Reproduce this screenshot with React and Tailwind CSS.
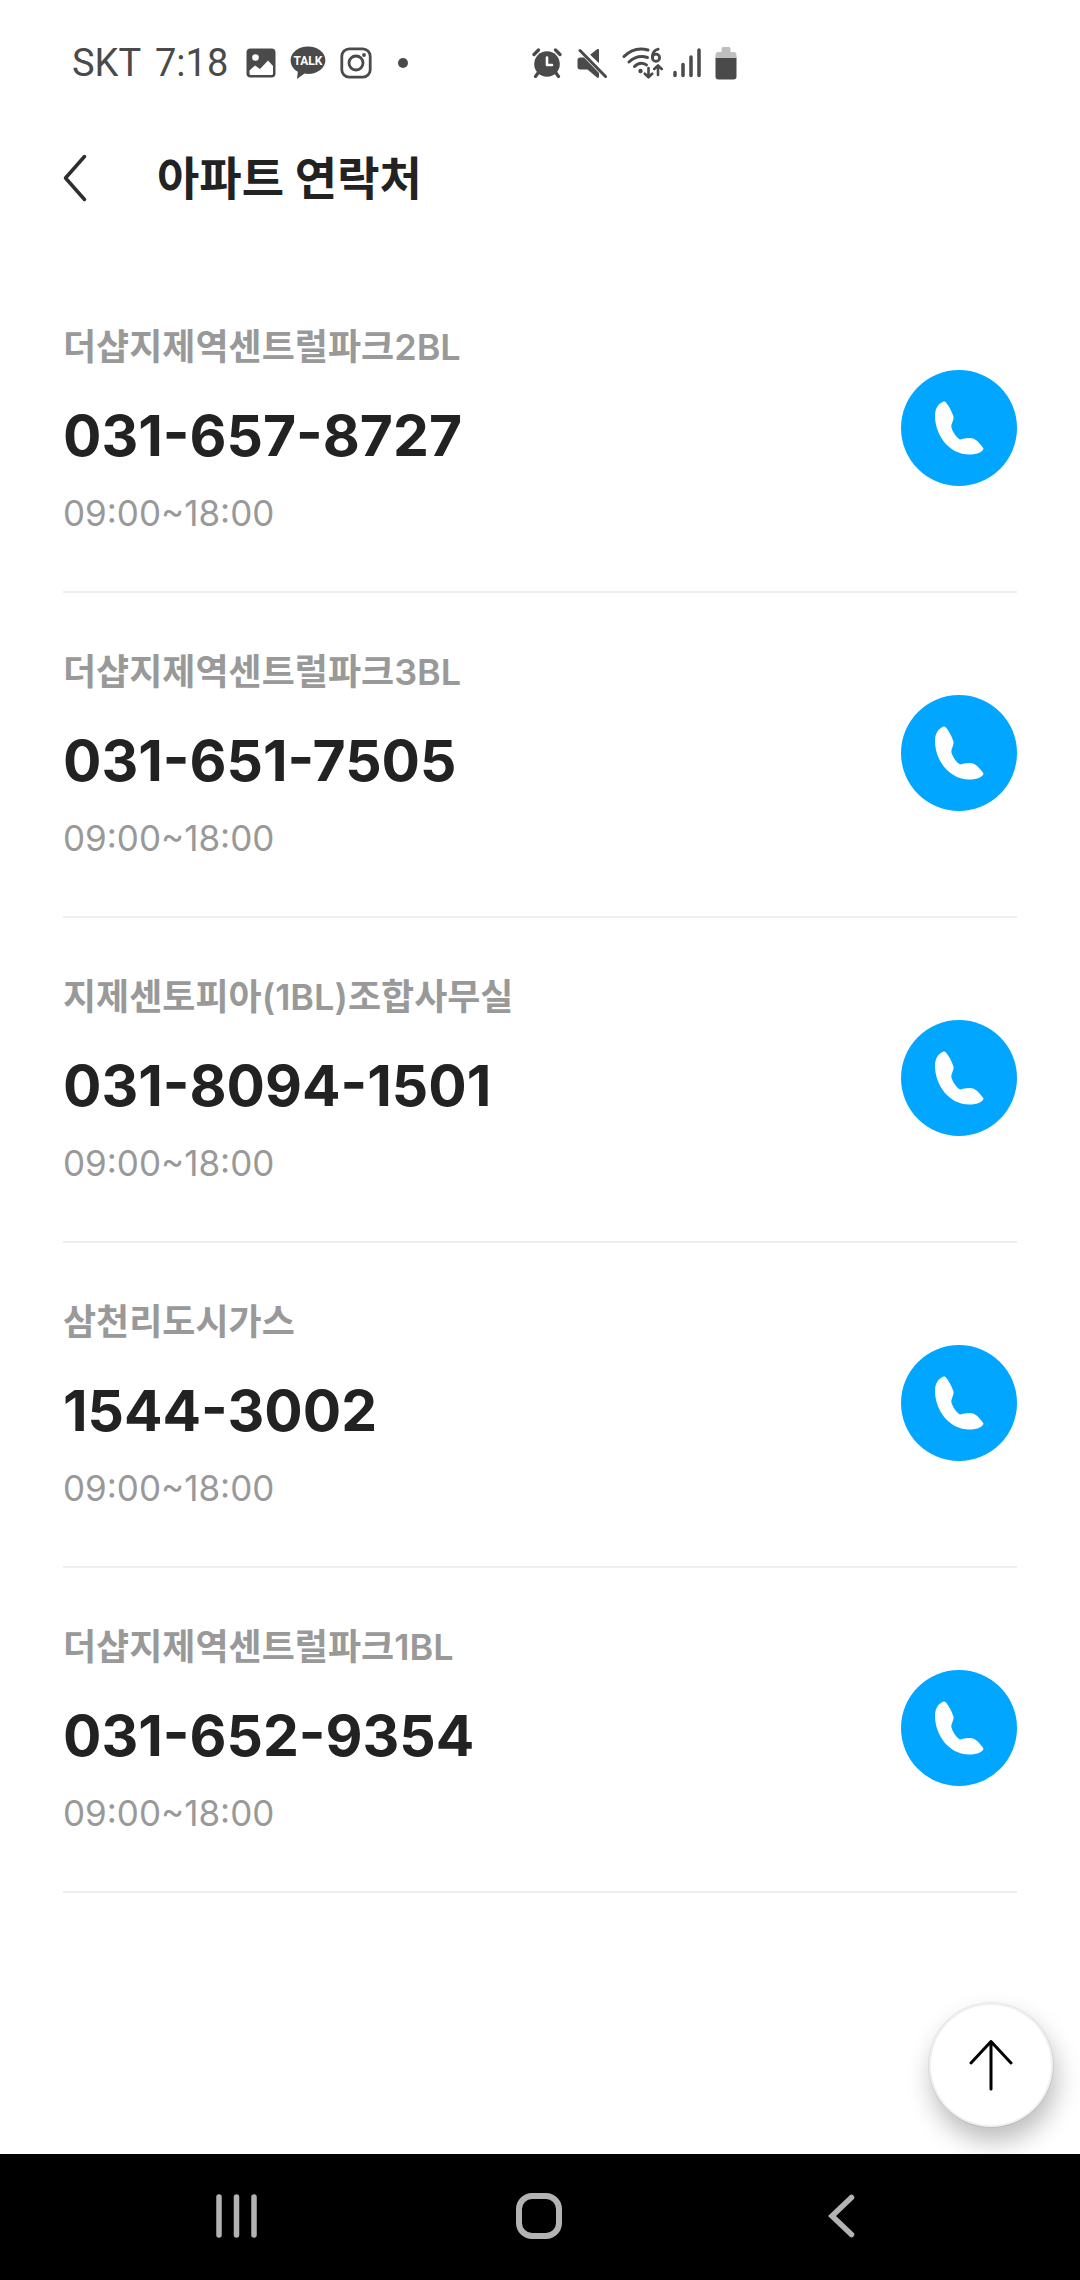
const contacts = [
  { name: '더샵지제역센트럴파크2BL', phone: '031-657-8727', hours: '09:00~18:00' },
  { name: '더샵지제역센트럴파크3BL', phone: '031-651-7505', hours: '09:00~18:00' },
  { name: '지제센토피아(1BL)조합사무실', phone: '031-8094-1501', hours: '09:00~18:00' },
  { name: '삼천리도시가스', phone: '1544-3002', hours: '09:00~18:00' },
  { name: '더샵지제역센트럴파크1BL', phone: '031-652-9354', hours: '09:00~18:00' },
];

function PictureIcon() {
  return (
    <svg width="30" height="30" viewBox="0 0 30 30" aria-hidden="true">
      <rect x="0.5" y="0.5" width="29" height="29" rx="4" fill="#4a4a4a" />
      <circle cx="9.500" cy="9.500" r="3.300" fill="#fff" />
      <path d="M3.500 22.500 9 17.500l5 3.500 8-8.500 5 5.500v7.500a1.500 1.500 0 0 1-1.500 1.500H5a1.500 1.500 0 0 1-1.500-1.500z" fill="#fff" />
    </svg>
  );
}

function TalkIcon() {
  return (
    <svg width="36" height="34" viewBox="0 0 36 34" aria-hidden="true">
      <path d="M18 .5C8.400.5.600 6.600.600 14.200c0 4.900 2.800 9.100 7.200 11.500L7 33l7.500-5.400c1.100.2 2.300.3 3.500.3 9.600 0 17.400-6.100 17.400-13.700S27.600.5 18 .5z" fill="#4a4a4a" />
      <text x="18" y="19" textAnchor="middle" fontFamily="Roboto, sans-serif" fontWeight="700" fontSize="12" fill="#fff">TALK</text>
    </svg>
  );
}

function CameraIcon() {
  return (
    <svg width="32" height="32" viewBox="0 0 32 32" fill="none" stroke="#4a4a4a" aria-hidden="true">
      <rect x="1.800" y="1.800" width="28.400" height="28.400" rx="7.500" strokeWidth="2.800" />
      <circle cx="16" cy="16" r="7" strokeWidth="2.800" />
      <circle cx="24" cy="8" r="1.900" fill="#4a4a4a" stroke="none" />
    </svg>
  );
}

function AlarmIcon() {
  return (
    <svg width="30" height="30" viewBox="0 0 30 30" fill="none" stroke="#4a4a4a" strokeLinecap="round" aria-hidden="true">
      <circle cx="15" cy="16" r="12.800" fill="#4a4a4a" stroke="none" />
      <path d="M2 6.500 6.500 2M28 6.500 23.500 2" strokeWidth="3.200" />
      <path d="m6 25-2.500 3.500M24 25l2.500 3.500" strokeWidth="3.200" />
      <path d="M15 9.500V17h5" stroke="#fff" strokeWidth="2.600" strokeLinejoin="round" />
    </svg>
  );
}

function MuteIcon() {
  return (
    <svg width="31" height="31" viewBox="-1 0 31 31" aria-hidden="true">
      <path d="M12.800 7 20 1.200c.9-.7 2-.2 2 .9v13.100z" fill="#4a4a4a" />
      <path d="M3 9.500h4L22 25v3.500c0 1.100-1.100 1.600-2 .9L10.500 21.500H3c-1.400 0-2.500-1.100-2.500-2.500v-7c0-1.400 1.100-2.500 2.500-2.500z" fill="#4a4a4a" />
      <path d="M5 0 31 26" stroke="#fff" strokeWidth="2" />
      <path d="M3 2.500 28.500 28.500" stroke="#4a4a4a" strokeWidth="3" strokeLinecap="round" />
    </svg>
  );
}

function WifiIcon() {
  return (
    <svg width="42" height="32" viewBox="-1 0 42 32" fill="none" stroke="#4a4a4a" strokeLinecap="round" aria-hidden="true">
      <path d="M2 9.500C8.500 3 17 .5 26 3" strokeWidth="3" />
      <path d="M7 15c5.500-5 12-6.500 18.500-4.500" strokeWidth="3" />
      <path d="M12.500 19.500c3.500-3.500 8-4 12-1.500" strokeWidth="3" />
      <circle cx="18.500" cy="24" r="2.200" fill="#4a4a4a" stroke="none" />
      <circle cx="34" cy="10.800" r="3.600" strokeWidth="2.800" />
      <path d="M30.400 10.500c0-4.500 2-7.500 5.800-8.300" strokeWidth="2.800" />
      <path d="M26.500 21v9M22.800 26.700l3.700 3.600 3.700-3.600M36 28v-9.500M32.300 22l3.700-3.600 3.700 3.600" strokeWidth="2.600" strokeLinejoin="round" />
    </svg>
  );
}

function SignalIcon() {
  return (
    <svg width="28" height="30" viewBox="0 0 28 30" stroke="#4a4a4a" strokeWidth="3.500" strokeLinecap="round" aria-hidden="true">
      <path d="M2 24.500V27.500M10 16.500V27.500M18 9V27.500M26 2V27.500" />
    </svg>
  );
}

function BatteryIcon() {
  return (
    <svg width="22" height="33" viewBox="0 0 22 33" aria-hidden="true">
      <path d="M6.500 1.500A1.500 1.500 0 0 1 8 0h6a1.500 1.500 0 0 1 1.500 1.500V5H18.500A3 3 0 0 1 21.500 8v4H.5V8a3 3 0 0 1 3-3h3z" fill="#bfbfbf" />
      <path d="M.5 11h21v18.500a3 3 0 0 1-3 3h-15a3 3 0 0 1-3-3z" fill="#4a4a4a" />
    </svg>
  );
}

function StatusBar() {
  return (
    <div className="flex h-[126px] items-center pl-[72px] font-['Roboto',sans-serif] text-[38px] leading-none text-[#4a4a4a]">
      <span className="w-[83px]">SKT</span>
      <span className="w-[91px]">7:18</span>
      <div className="flex w-[286px] items-center gap-3.5">
        <PictureIcon />
        <TalkIcon />
        <CameraIcon />
        <span className="ml-3 size-2.5 rounded-full bg-[#4a4a4a]" />
      </div>
      <div className="flex items-center gap-3.5">
        <AlarmIcon />
        <MuteIcon />
        <WifiIcon />
        <div className="-ml-1 flex items-center gap-3.5">
          <SignalIcon />
          <BatteryIcon />
        </div>
      </div>
    </div>
  );
}

function Header() {
  return (
    <header className="flex h-[104px] items-center px-[63px]">
      <button type="button" aria-label="뒤로" className="flex w-[94px] items-center">
        <svg width="25" height="48" viewBox="0 0 25 48" fill="none" stroke="#2e2e2e" strokeWidth="3.500" strokeLinecap="round" strokeLinejoin="round" aria-hidden="true">
          <path d="M21.500 2.500 2.500 24l19 21.500" />
        </svg>
      </button>
      <h1 className="text-[46px] leading-[62px] font-bold text-[#222]">아파트 연락처</h1>
    </header>
  );
}

function ContactRow({ name, phone, hours }) {
  return (
    <li className="flex items-center justify-between border-b-2 border-[#eee] pt-[55px] pb-[54px]">
      <div>
        <h2 className="text-[36px] leading-[48px] font-semibold text-[#999]">{name}</h2>
        <p className="mt-[33px] text-[57px] leading-[64px] font-bold text-[#222]">{phone}</p>
        <p className="mt-[21px] text-[35px] leading-[48px] font-normal text-[#999]">{hours}</p>
      </div>
      <a href={'tel:' + phone} aria-label={name + ' 전화'} className="mb-1 size-[116px] shrink-0 rounded-full bg-[#00a6ff]">
        <svg viewBox="0 0 116 116" fill="#fff" aria-hidden="true">
          <path d="M42.500 31.500C37 33.500 34 39 34 46c0 19 14 38.500 34.500 38.500 6 0 11-1.500 13.500-4.500.7-1 .5-1.700-.3-2.700C78 72.500 75 68.500 69.500 68c-4-.3-7.500 1-10.500 1.500C55 67 51.500 61.500 50.300 57c0-4 2.700-6.500 2.200-10.500C50.500 41 48 36 45 32.500c-.8-1-1.600-1.300-2.500-1z" />
        </svg>
      </a>
    </li>
  );
}

function SystemNav() {
  return (
    <nav className="grid h-[126px] grid-cols-3 bg-black pr-[88px] pb-0.5 pl-[86px]">
      <button type="button" aria-label="최근 앱" className="flex items-center justify-center">
        <svg width="42" height="44" viewBox="0 0 42 44" stroke="#b3b3b3" strokeWidth="5.500" strokeLinecap="round" aria-hidden="true">
          <path d="M3 3v38M20.500 3v38M38 3v38" />
        </svg>
      </button>
      <button type="button" aria-label="홈" className="flex items-center justify-center">
        <svg width="46" height="46" viewBox="0 0 46 46" fill="none" stroke="#b3b3b3" strokeWidth="6" aria-hidden="true">
          <rect x="3" y="3" width="40" height="40" rx="13" />
        </svg>
      </button>
      <button type="button" aria-label="뒤로 가기" className="flex items-center justify-center">
        <svg width="27" height="44" viewBox="0 0 27 44" fill="none" stroke="#b3b3b3" strokeWidth="5.500" strokeLinecap="round" aria-hidden="true">
          <path d="M23.500 3.500 4 22l19.500 18.500" />
        </svg>
      </button>
    </nav>
  );
}

export default function App() {
  return (
    <div className="flex min-h-screen flex-col bg-white font-['Inter','Noto_Sans_CJK_KR',sans-serif]">
      <StatusBar />
      <Header />
      <main className="relative flex-1 px-[63px] pt-[38px]">
        <ul>
          {contacts.map((contact) => (
            <ContactRow key={contact.name} {...contact} />
          ))}
        </ul>
        <button
          type="button"
          aria-label="맨 위로"
          className="absolute right-[26px] bottom-[26px] flex size-[126px] items-center justify-center rounded-full border-3 border-black/6 bg-white bg-clip-padding shadow-[3px_14px_24px_rgba(0,0,0,0.25)]"
        >
          <svg width="44" height="52" viewBox="0 0 44 52" fill="none" stroke="#000" strokeWidth="3" strokeLinecap="round" strokeLinejoin="round" aria-hidden="true">
            <path d="M22 50V2.500M2 24 22 2.500 42 24" />
          </svg>
        </button>
      </main>
      <SystemNav />
    </div>
  );
}
